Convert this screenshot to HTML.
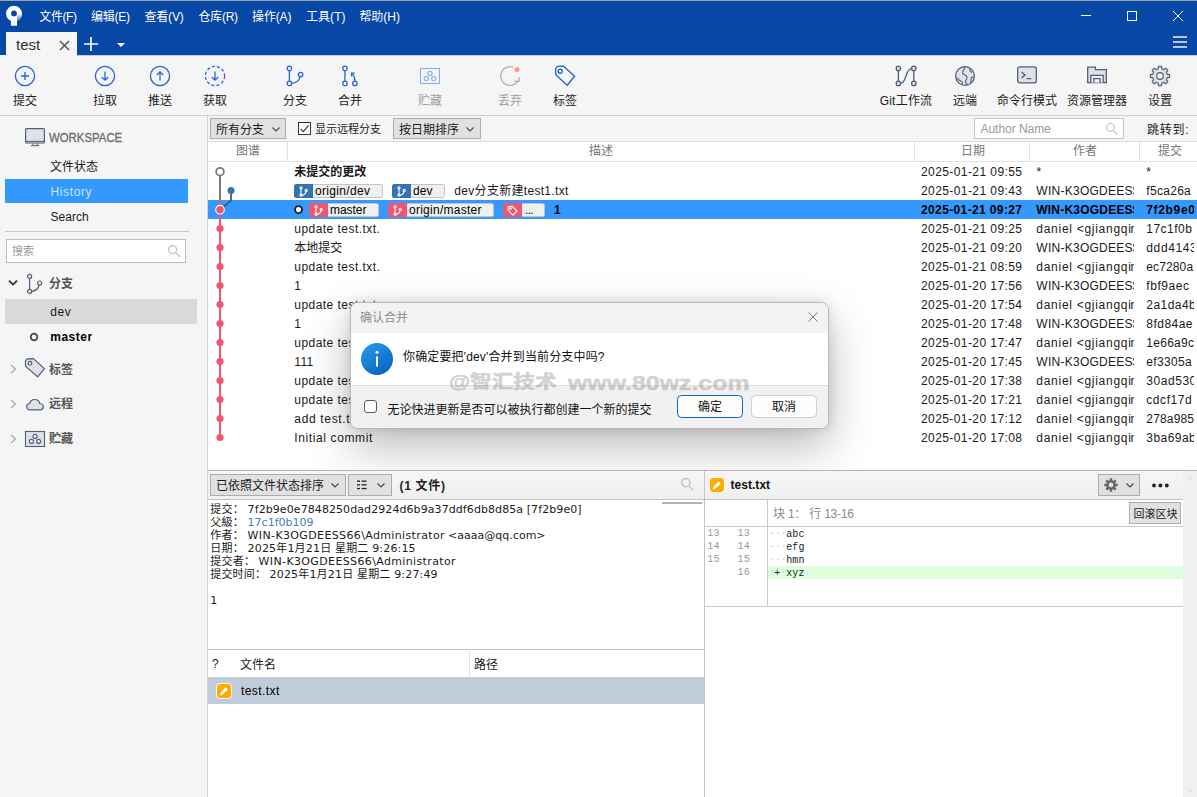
<!DOCTYPE html>
<html lang="zh-CN"><head><meta charset="utf-8"><title>Sourcetree</title>
<style>
html,body{margin:0;padding:0;}
body{width:1197px;height:797px;overflow:hidden;background:#fff;position:relative;
 font-family:"Liberation Sans","Noto Sans CJK SC",sans-serif;font-size:12px;}
.b{position:absolute;box-sizing:border-box;}
.t{position:absolute;white-space:pre;}
.v{font-family:"DejaVu Sans","Noto Sans CJK SC",sans-serif;}
.m{font-family:"Liberation Mono","DejaVu Sans Mono",monospace;}
svg{overflow:visible;}
</style></head>
<body>
<div class="b" style="left:0px;top:0px;width:1197px;height:55px;background:#0747A6;"></div>
<div class="b" style="left:0px;top:0px;width:1197px;height:1px;background:#9AA4A8;"></div>
<svg class="b" style="left:5px;top:5px;" width="20" height="22" viewBox="0 0 20 22"><defs><linearGradient id="lg" x1="0" y1="0" x2="0" y2="1"><stop offset="0" stop-color="#fff"/><stop offset="1" stop-color="#3E6DB8"/></linearGradient></defs><circle cx="9" cy="8.6" r="7.9" fill="#fff"/><path d="M12 8.6H16.9A7.9 7.9 0 0 1 12 15.9Z" fill="url(#lg)"/><rect x="5.9" y="11" width="6.1" height="9.8" rx="0.6" fill="#fff"/><circle cx="9" cy="8.4" r="2.9" fill="#0747A6"/></svg>
<div class="t " style="top:6.5px;font-size:12px;line-height:20px;height:20px;color:#fff;letter-spacing:-0.407px;left:39.3px;"><span id="t1">文件(F)</span></div>
<div class="t " style="top:6.5px;font-size:12px;line-height:20px;height:20px;color:#fff;letter-spacing:-0.25px;left:91px;"><span id="t2">编辑(E)</span></div>
<div class="t " style="top:6.5px;font-size:12px;line-height:20px;height:20px;color:#fff;letter-spacing:-0.15px;left:144.4px;"><span id="t3">查看(V)</span></div>
<div class="t " style="top:6.5px;font-size:12px;line-height:20px;height:20px;color:#fff;letter-spacing:-0.268px;left:198.5px;"><span id="t4">仓库(R)</span></div>
<div class="t " style="top:6.5px;font-size:12px;line-height:20px;height:20px;color:#fff;letter-spacing:-0.125px;left:252px;"><span id="t5">操作(A)</span></div>
<div class="t " style="top:6.5px;font-size:12px;line-height:20px;height:20px;color:#fff;letter-spacing:0.043px;left:306px;"><span id="t6">工具(T)</span></div>
<div class="t " style="top:6.5px;font-size:12px;line-height:20px;height:20px;color:#fff;letter-spacing:-0.018px;left:359.4px;"><span id="t7">帮助(H)</span></div>
<svg class="b" style="left:1075px;top:5px;" width="115" height="22" viewBox="0 0 115 22"><g stroke="#fff" stroke-width="1" fill="none"><path d="M6 10.5H16"/><rect x="52.5" y="6.5" width="9" height="9"/><path d="M98 6L108 16M108 6L98 16"/></g></svg>
<svg class="b" style="left:1173px;top:36px;" width="14" height="12" viewBox="0 0 14 12"><g fill="#B5C6E4"><rect x="0" y="0" width="14" height="2"/><rect x="0" y="5" width="14" height="2"/><rect x="0" y="10" width="14" height="2"/></g></svg>
<div class="b" style="left:6px;top:32px;width:71px;height:24px;background:#F5F5F5;"></div>
<div class="t " style="top:34.5px;font-size:15px;line-height:20px;height:20px;color:#333;letter-spacing:0.004px;left:16px;"><span id="t8">test</span></div>
<svg class="b" style="left:59px;top:40px;" width="11" height="11" viewBox="0 0 11 11"><path d="M1 1L10 10M10 1L1 10" stroke="#555" stroke-width="1.5" fill="none"/></svg>
<svg class="b" style="left:84px;top:37px;" width="14" height="14" viewBox="0 0 14 14"><path d="M7 0V14M0 7H14" stroke="#fff" stroke-width="1.6" fill="none"/></svg>
<svg class="b" style="left:117px;top:43px;" width="8" height="4" viewBox="0 0 8 4"><path d="M0 0H8L4 4Z" fill="#fff"/></svg>
<div class="b" style="left:0px;top:55px;width:1197px;height:61px;background:#F5F5F5;border-bottom:1px solid #D0D0D0;"></div>
<div class="b" style="left:77px;top:55px;width:1120px;height:1px;background:#C9C9C9;"></div>
<svg class="b" style="left:13px;top:64px;" width="24" height="24" viewBox="0 0 24 24"><circle cx="12" cy="12" r="9.6" fill="none" stroke="#2A66D6" stroke-width="1.3"/><path d="M12 8V16M8 12H16" stroke="#2A66D6" stroke-width="1.4" fill="none"/></svg>
<div class="t " style="top:90.8px;font-size:12px;line-height:20px;height:20px;color:#222;left:-175px;width:400px;text-align:center;"><span id="t9">提交</span></div>
<svg class="b" style="left:93px;top:64px;" width="24" height="24" viewBox="0 0 24 24"><circle cx="12" cy="12" r="9.6" fill="none" stroke="#2A66D6" stroke-width="1.3"/><path d="M12 7.5V16M8.8 13L12 16.2L15.2 13" stroke="#2A66D6" stroke-width="1.3" fill="none"/></svg>
<div class="t " style="top:90.8px;font-size:12px;line-height:20px;height:20px;color:#222;left:-95px;width:400px;text-align:center;"><span id="t10">拉取</span></div>
<svg class="b" style="left:148px;top:64px;" width="24" height="24" viewBox="0 0 24 24"><circle cx="12" cy="12" r="9.6" fill="none" stroke="#2A66D6" stroke-width="1.3"/><path d="M12 16.5V8M8.8 11L12 7.8L15.2 11" stroke="#2A66D6" stroke-width="1.3" fill="none"/></svg>
<div class="t " style="top:90.8px;font-size:12px;line-height:20px;height:20px;color:#222;left:-40px;width:400px;text-align:center;"><span id="t11">推送</span></div>
<svg class="b" style="left:203px;top:64px;" width="24" height="24" viewBox="0 0 24 24"><circle cx="12" cy="12" r="9.6" fill="none" stroke="#2A66D6" stroke-width="1.3" stroke-dasharray="3.1 2.1"/><path d="M12 7.5V16M8.8 13L12 16.2L15.2 13" stroke="#2A66D6" stroke-width="1.3" fill="none"/></svg>
<div class="t " style="top:90.8px;font-size:12px;line-height:20px;height:20px;color:#222;left:15px;width:400px;text-align:center;"><span id="t12">获取</span></div>
<svg class="b" style="left:283px;top:64px;" width="24" height="24" viewBox="0 0 24 24"><g fill="none" stroke="#2A66D6" stroke-width="1.3"><path d="M6.4 6.6V17.2"/><path d="M8.5 19.3C13.5 19 16.3 16 17.2 12.6"/><circle cx="6.4" cy="4.4" r="2.2" fill="#F5F5F5"/><circle cx="6.4" cy="19.4" r="2.2" fill="#F5F5F5"/><circle cx="17.6" cy="10.5" r="2.2" fill="#F5F5F5"/></g></svg>
<div class="t " style="top:90.8px;font-size:12px;line-height:20px;height:20px;color:#222;left:95px;width:400px;text-align:center;"><span id="t13">分支</span></div>
<svg class="b" style="left:338px;top:64px;" width="24" height="24" viewBox="0 0 24 24"><g fill="none" stroke="#2A66D6" stroke-width="1.3"><path d="M6.9 6.6V17.2"/><path d="M16.9 17.2C16.9 13.5 15.8 11.2 14.2 9.6"/><path d="M13.6 12.4V9.2H16.8"/><circle cx="6.9" cy="4.4" r="2.2" fill="#F5F5F5"/><circle cx="6.9" cy="19.4" r="2.2" fill="#F5F5F5"/><circle cx="16.9" cy="19.4" r="2.2" fill="#F5F5F5"/></g></svg>
<div class="t " style="top:90.8px;font-size:12px;line-height:20px;height:20px;color:#222;left:150px;width:400px;text-align:center;"><span id="t14">合并</span></div>
<svg class="b" style="left:420px;top:68px;" width="20" height="16" viewBox="0 0 20 16"><g fill="none" stroke="#8FAEE9" stroke-width="1.1"><rect x="0.5" y="0.5" width="19" height="15"/><circle cx="10" cy="5.4" r="2.1"/><circle cx="6.3" cy="10.6" r="2.1"/><circle cx="13.7" cy="10.6" r="2.1"/></g></svg>
<div class="t " style="top:90.8px;font-size:12px;line-height:20px;height:20px;color:#A0A0A0;left:230px;width:400px;text-align:center;"><span id="t15">贮藏</span></div>
<svg class="b" style="left:498px;top:64px;" width="24" height="24" viewBox="0 0 24 24"><g fill="none" stroke="#A9B0BC" stroke-width="1.3"><path d="M15.2 3.1A9.4 9.4 0 1 0 20.2 16.8"/><path d="M16.4 17.3H21V13" /></g><circle cx="19" cy="5.6" r="2.5" fill="#FF9A85"/></svg>
<div class="t " style="top:90.8px;font-size:12px;line-height:20px;height:20px;color:#A0A0A0;left:310px;width:400px;text-align:center;"><span id="t16">丢弃</span></div>
<svg class="b" style="left:553px;top:64px;" width="24" height="24" viewBox="0 0 24 24"><g fill="none" stroke="#2A66D6" stroke-width="1.4" stroke-linejoin="round"><path d="M2.6 4.6L4.4 2.4L10.6 2.2L21.6 12.2L14.2 21.2L2.8 10.8Z"/><circle cx="7.2" cy="7.2" r="2"/></g></svg>
<div class="t " style="top:90.8px;font-size:12px;line-height:20px;height:20px;color:#222;left:365px;width:400px;text-align:center;"><span id="t17">标签</span></div>
<svg class="b" style="left:894px;top:64px;" width="24" height="24" viewBox="0 0 24 24"><g fill="none" stroke="#505F79" stroke-width="1.3"><path d="M4.4 6.6V17.2M19.8 6.6V17.2"/><path d="M6.6 19.2C13.4 18.6 10.6 5.2 17.6 4.6"/><circle cx="4.4" cy="4.4" r="2.2" fill="#DFE1E6"/><circle cx="4.4" cy="19.4" r="2.2" fill="#DFE1E6"/><circle cx="19.8" cy="4.4" r="2.2" fill="#DFE1E6"/><circle cx="19.8" cy="19.4" r="2.2" fill="#DFE1E6"/></g></svg>
<div class="t " style="top:90.8px;font-size:12px;line-height:20px;height:20px;color:#222;letter-spacing:0.231px;left:706px;width:400px;text-align:center;"><span id="t18">Git工作流</span></div>
<svg class="b" style="left:953px;top:64px;" width="24" height="24" viewBox="0 0 24 24"><g stroke="#505F79" stroke-width="1.3"><circle cx="12" cy="12" r="9.4" fill="#DFE1E6"/><path fill="none" stroke-width="1.1" d="M11 3C13 5 9 6.5 9.6 9C10.2 11 13.2 10.6 14 13C14.6 15 12 16 12.6 18.4C13 19.8 14.4 20.4 15 21M17.4 4.6C16 6.4 17.6 8 19.4 8.4M20.8 13.2C19 12.4 17.6 13.6 18 15.4C18.2 16.6 17.4 17.4 17.8 18.8M3.6 14C5.6 14.6 6 16.6 8.2 17.2C9.6 17.6 9.8 19.2 9 20.6"/></g></svg>
<div class="t " style="top:90.8px;font-size:12px;line-height:20px;height:20px;color:#222;left:765px;width:400px;text-align:center;"><span id="t19">远端</span></div>
<svg class="b" style="left:1017px;top:66px;" width="20" height="18" viewBox="0 0 20 18"><g stroke="#505F79" stroke-width="1.3"><rect x="0.7" y="0.9" width="18.6" height="16" rx="2.2" fill="#DFE1E6"/><path fill="none" d="M4.6 6L8 9L4.6 12M9.6 12.6H14.2"/></g></svg>
<div class="t " style="top:90.8px;font-size:12px;line-height:20px;height:20px;color:#222;left:827px;width:400px;text-align:center;"><span id="t20">命令行模式</span></div>
<svg class="b" style="left:1087px;top:66px;" width="20" height="18" viewBox="0 0 20 18"><g stroke="#505F79" stroke-width="1.3" stroke-linejoin="miter"><path fill="#DFE1E6" d="M0.7 16.6V1.2H8.4V3.6H19.3V16.6Z"/><path fill="#F5F5F5" d="M3.8 16.6V9.4H16.2V16.6"/><path fill="none" d="M6.8 16.6V12.6H13.2V16.6"/></g></svg>
<div class="t " style="top:90.8px;font-size:12px;line-height:20px;height:20px;color:#222;left:897px;width:400px;text-align:center;"><span id="t21">资源管理器</span></div>
<svg class="b" style="left:1148px;top:64px;" width="24" height="24" viewBox="0 0 24 24"><g stroke="#505F79" stroke-width="1.2" stroke-linejoin="round"><path fill="#DFE1E6" d="M21.57 10.41L21.57 13.59L19.21 13.67L18.28 15.92L19.89 17.64L17.64 19.89L15.92 18.28L13.67 19.21L13.59 21.57L10.41 21.57L10.33 19.21L8.08 18.28L6.36 19.89L4.11 17.64L5.72 15.92L4.79 13.67L2.43 13.59L2.43 10.41L4.79 10.33L5.72 8.08L4.11 6.36L6.36 4.11L8.08 5.72L10.33 4.79L10.41 2.43L13.59 2.43L13.67 4.79L15.92 5.72L17.64 4.11L19.89 6.36L18.28 8.08L19.21 10.33Z"/><circle cx="12" cy="12" r="3.3" fill="#F5F5F5"/></g></svg>
<div class="t " style="top:90.8px;font-size:12px;line-height:20px;height:20px;color:#222;left:960px;width:400px;text-align:center;"><span id="t22">设置</span></div>
<div class="b" style="left:0px;top:116px;width:208px;height:681px;background:#F5F5F5;border-right:1px solid #D4D4D4;"></div>
<svg class="b" style="left:25px;top:128px;" width="20" height="19" viewBox="0 0 20 19"><g stroke="#505F79" stroke-width="1.2"><rect x="0.6" y="0.6" width="18.8" height="14.4" rx="1" fill="#DFE1E6"/><path d="M0.6 13.4H19.4" stroke-width="1"/><path d="M8 15.4V17.6M12 15.4V17.6M6 17.7H14" fill="none" stroke-width="1"/></g></svg>
<div class="t " style="top:127.6px;font-size:13.5px;line-height:20px;height:20px;color:#6A6A6A;left:49.3px;-webkit-text-stroke:0.3px #6A6A6A;transform:scaleX(0.8437);transform-origin:0 50%;"><span id="t23">WORKSPACE</span></div>
<div class="t " style="top:157.0px;font-size:12px;line-height:20px;height:20px;color:#1a1a1a;left:50px;"><span id="t24">文件状态</span></div>
<div class="b" style="left:5px;top:179px;width:183px;height:24px;background:#3399FF;"></div>
<div class="t " style="top:181.5px;font-size:12px;line-height:20px;height:20px;color:#CFE4FF;letter-spacing:0.643px;left:50.4px;"><span id="t25">History</span></div>
<div class="t " style="top:206.5px;font-size:12px;line-height:20px;height:20px;color:#1a1a1a;letter-spacing:0.074px;left:50.4px;"><span id="t26">Search</span></div>
<div class="b" style="left:5px;top:231px;width:184px;height:1px;background:#C8C8C8;"></div>
<div class="b" style="left:6px;top:239px;width:180px;height:24px;background:#fff;border:1px solid #BDBDBD;"></div>
<div class="t " style="top:240.5px;font-size:11px;line-height:20px;height:20px;color:#999;left:12px;"><span id="t27">搜索</span></div>
<svg class="b" style="left:167px;top:243.5px;" width="14" height="14" viewBox="0 0 14 14"><g fill="none" stroke="#C0C0C0" stroke-width="1.2"><circle cx="5.6" cy="5.6" r="4"/><path d="M8.6 8.6L13 13"/></g></svg>
<svg class="b" style="left:8px;top:279px;" width="10" height="8" viewBox="0 0 10 8"><path d="M1 1.6L5 5.6L9 1.6" fill="none" stroke="#333" stroke-width="1.8"/></svg>
<svg class="b" style="left:25px;top:273px;" width="18" height="22" viewBox="0 0 18 22"><g fill="none" stroke="#505F79" stroke-width="1.2"><path d="M4.6 5.4V16.4"/><path d="M6.4 18.4C11 18 13.4 15.6 14.2 12"/><circle cx="4.6" cy="3.4" r="2" fill="#F5F5F5"/><circle cx="4.6" cy="18.4" r="2" fill="#F5F5F5"/><circle cx="14.6" cy="10" r="2" fill="#F5F5F5"/></g></svg>
<div class="t " style="top:274.0px;font-size:12px;line-height:20px;height:20px;color:#555;font-weight:bold;left:49px;"><span id="t28">分支</span></div>
<div class="b" style="left:5px;top:299px;width:192px;height:25px;background:#D9D9D9;"></div>
<div class="t " style="top:301.5px;font-size:12px;line-height:20px;height:20px;color:#1a1a1a;letter-spacing:0.62px;left:50.2px;"><span id="t29">dev</span></div>
<svg class="b" style="left:29px;top:332px;" width="10" height="10" viewBox="0 0 10 10"><circle cx="5" cy="5" r="3.3" fill="none" stroke="#3B4A66" stroke-width="1.8"/></svg>
<div class="t " style="top:326.5px;font-size:12px;line-height:20px;height:20px;color:#000;font-weight:bold;letter-spacing:0.528px;left:50.2px;"><span id="t30">master</span></div>
<svg class="b" style="left:10px;top:363.8px;" width="7" height="10" viewBox="0 0 7 10"><path d="M1 1L5.4 5L1 9" fill="none" stroke="#B0B0B0" stroke-width="1.5"/></svg>
<svg class="b" style="left:10px;top:399.0px;" width="7" height="10" viewBox="0 0 7 10"><path d="M1 1L5.4 5L1 9" fill="none" stroke="#B0B0B0" stroke-width="1.5"/></svg>
<svg class="b" style="left:10px;top:434.1px;" width="7" height="10" viewBox="0 0 7 10"><path d="M1 1L5.4 5L1 9" fill="none" stroke="#B0B0B0" stroke-width="1.5"/></svg>
<svg class="b" style="left:24px;top:357px;" width="24" height="24" viewBox="0 0 24 24"><g stroke="#505F79" stroke-width="1.2" stroke-linejoin="round"><path fill="#DFE1E6" d="M1.4 4L3 1.8L9.4 1.6L20.4 11.6L13.6 19.8L1.6 9.4Z"/><circle cx="6" cy="6.2" r="1.8" fill="#F5F5F5"/></g></svg>
<div class="t " style="top:359.5px;font-size:12px;line-height:20px;height:20px;color:#555;font-weight:bold;left:49px;"><span id="t31">标签</span></div>
<svg class="b" style="left:25.5px;top:397.5px;" width="18" height="13" viewBox="0 0 18 13"><path d="M4.2 11.8C2.2 11.8 0.7 10.5 0.7 8.7C0.7 7 2 5.7 3.7 5.5C4.3 3.1 6.3 1.5 8.7 1.5C11.2 1.5 13.2 3.1 13.8 5.5C15.8 5.7 17.3 7 17.3 8.8C17.3 10.5 16 11.8 14.2 11.8Z" fill="#DFE1E6" stroke="#505F79" stroke-width="1.2"/></svg>
<div class="t " style="top:394.0px;font-size:12px;line-height:20px;height:20px;color:#555;font-weight:bold;left:49px;"><span id="t32">远程</span></div>
<svg class="b" style="left:25px;top:431px;" width="20" height="16" viewBox="0 0 20 16"><g stroke="#505F79" stroke-width="1.1"><rect x="0.5" y="0.5" width="19" height="15" fill="#DFE1E6"/><circle cx="10" cy="5.4" r="2" fill="#F5F5F5"/><circle cx="6.4" cy="10.4" r="2" fill="#F5F5F5"/><circle cx="13.6" cy="10.4" r="2" fill="#F5F5F5"/></g></svg>
<div class="t " style="top:429.1px;font-size:12px;line-height:20px;height:20px;color:#555;font-weight:bold;left:49px;"><span id="t33">贮藏</span></div>
<div class="b" style="left:208px;top:116px;width:989px;height:26px;background:#F5F5F5;"></div>
<div class="b" style="left:210px;top:118px;width:76px;height:21px;background:#E1E1E1;border:1px solid #ADADAD;"></div>
<div class="t " style="top:119.5px;font-size:12px;line-height:20px;height:20px;color:#1a1a1a;left:216px;"><span id="t34">所有分支</span></div>
<svg class="b" style="left:271.7px;top:126.5px;" width="8" height="5" viewBox="0 0 8 5"><path d="M0.5 0.5L4 4L7.5 0.5" fill="none" stroke="#444" stroke-width="1.1"/></svg>
<div class="b" style="left:298px;top:122px;width:13px;height:13px;background:#fff;border:1px solid #333;"></div>
<svg class="b" style="left:298px;top:122px;" width="13" height="13" viewBox="0 0 13 13"><path d="M2.6 6.8L5.2 9.6L10.6 3.4" fill="none" stroke="#333" stroke-width="1.1"/></svg>
<div class="t " style="top:119.0px;font-size:11px;line-height:20px;height:20px;color:#1a1a1a;left:315px;"><span id="t35">显示远程分支</span></div>
<div class="b" style="left:393px;top:118px;width:88px;height:21px;background:#E1E1E1;border:1px solid #ADADAD;"></div>
<div class="t " style="top:119.5px;font-size:12px;line-height:20px;height:20px;color:#1a1a1a;left:399px;"><span id="t36">按日期排序</span></div>
<svg class="b" style="left:466px;top:126.5px;" width="8" height="5" viewBox="0 0 8 5"><path d="M0.5 0.5L4 4L7.5 0.5" fill="none" stroke="#444" stroke-width="1.1"/></svg>
<div class="b" style="left:974px;top:118px;width:150px;height:21px;background:#fff;border:1px solid #C6C6C6;"></div>
<div class="t " style="top:118.5px;font-size:12px;line-height:20px;height:20px;color:#999;letter-spacing:-0.04px;left:980.5px;"><span id="t37">Author Name</span></div>
<svg class="b" style="left:1105px;top:122px;" width="14" height="14" viewBox="0 0 14 14"><g fill="none" stroke="#C0C0C0" stroke-width="1.2"><circle cx="5.4" cy="5.4" r="3.9"/><path d="M8.4 8.4L12.6 12.6"/></g></svg>
<div class="t " style="top:119.5px;font-size:12px;line-height:20px;height:20px;color:#1a1a1a;letter-spacing:0.719px;left:1147px;"><span id="t38">跳转到:</span></div>
<div class="b" style="left:208px;top:141px;width:989px;height:21px;background:#fff;border-top:1px solid #DCDCDC;border-bottom:1px solid #E3E3E3;"></div>
<div class="b" style="left:287px;top:142px;width:1px;height:19px;background:#E3E3E3;"></div>
<div class="b" style="left:914px;top:142px;width:1px;height:19px;background:#E3E3E3;"></div>
<div class="b" style="left:1029px;top:142px;width:1px;height:19px;background:#E3E3E3;"></div>
<div class="b" style="left:1139px;top:142px;width:1px;height:19px;background:#E3E3E3;"></div>
<div class="t " style="top:141.0px;font-size:12px;line-height:20px;height:20px;color:#777;left:48px;width:400px;text-align:center;"><span id="t39">图谱</span></div>
<div class="t " style="top:141.0px;font-size:12px;line-height:20px;height:20px;color:#777;left:401px;width:400px;text-align:center;"><span id="t40">描述</span></div>
<div class="t " style="top:141.0px;font-size:12px;line-height:20px;height:20px;color:#777;left:773px;width:400px;text-align:center;"><span id="t41">日期</span></div>
<div class="t " style="top:141.0px;font-size:12px;line-height:20px;height:20px;color:#777;left:885px;width:400px;text-align:center;"><span id="t42">作者</span></div>
<div class="t " style="top:141.0px;font-size:12px;line-height:20px;height:20px;color:#777;left:970px;width:400px;text-align:center;"><span id="t43">提交</span></div>
<div class="b" style="left:208px;top:200px;width:989px;height:19px;background:#3399FF;"></div>
<div class="t " style="top:162.0px;font-size:12px;line-height:20px;height:20px;color:#1a1a1a;font-weight:bold;left:294.3px;"><span id="t44">未提交的更改</span></div>
<div class="t " style="top:161.5px;font-size:12px;line-height:20px;height:20px;color:#1a1a1a;letter-spacing:0.417px;left:921px;"><span id="t45">2025-01-21 09:55</span></div>
<div class="t " style="top:161.5px;font-size:12px;line-height:20px;height:20px;color:#1a1a1a;left:1036.5px;"><span id="t46">*</span></div>
<div class="t " style="top:161.5px;font-size:12px;line-height:20px;height:20px;color:#1a1a1a;left:1146.3px;width:48px;overflow:hidden;"><span id="t47">*</span></div>
<div class="t " style="top:180.5px;font-size:12px;line-height:20px;height:20px;color:#1a1a1a;letter-spacing:0.417px;left:921px;"><span id="t48">2025-01-21 09:43</span></div>
<div class="t " style="top:180.5px;font-size:12px;line-height:20px;height:20px;color:#1a1a1a;letter-spacing:0.267px;left:1036.3px;"><span id="t49">WIN-K3OGDEES</span></div>
<div class="t " style="top:180.5px;font-size:12px;line-height:20px;height:20px;color:#1a1a1a;left:1132.2px;width:1.8px;overflow:hidden;"><span id="t50">S66\Administrator</span></div>
<div class="t " style="top:180.5px;font-size:12px;line-height:20px;height:20px;color:#1a1a1a;letter-spacing:0.299px;left:1146.3px;width:48px;overflow:hidden;"><span id="t51">f5ca26a</span></div>
<div class="t " style="top:199.5px;font-size:12px;line-height:20px;height:20px;color:#000;font-weight:bold;letter-spacing:0.372px;left:921px;"><span id="t52">2025-01-21 09:27</span></div>
<div class="t " style="top:199.5px;font-size:12px;line-height:20px;height:20px;color:#000;font-weight:bold;letter-spacing:0.208px;left:1036.3px;"><span id="t53">WIN-K3OGDEES</span></div>
<div class="t " style="top:199.5px;font-size:12px;line-height:20px;height:20px;color:#000;font-weight:bold;left:1132.2px;width:1.8px;overflow:hidden;"><span id="t54">S66\Administrator</span></div>
<div class="t " style="top:199.5px;font-size:12px;line-height:20px;height:20px;color:#000;font-weight:bold;letter-spacing:0.649px;left:1146.3px;width:48px;overflow:hidden;"><span id="t55">7f2b9e0</span></div>
<div class="t " style="top:218.5px;font-size:12px;line-height:20px;height:20px;color:#1a1a1a;letter-spacing:0.459px;left:294.3px;"><span id="t56">update test.txt.</span></div>
<div class="t " style="top:218.5px;font-size:12px;line-height:20px;height:20px;color:#1a1a1a;letter-spacing:0.417px;left:921px;"><span id="t57">2025-01-21 09:25</span></div>
<div class="t " style="top:218.5px;font-size:12px;line-height:20px;height:20px;color:#1a1a1a;letter-spacing:0.723px;left:1036.3px;"><span id="t58">daniel &lt;gjiangqi</span></div>
<div class="t " style="top:218.5px;font-size:12px;line-height:20px;height:20px;color:#1a1a1a;left:1130.6px;width:3.4px;overflow:hidden;"><span id="t59">n@qq.com&gt;</span></div>
<div class="t " style="top:218.5px;font-size:12px;line-height:20px;height:20px;color:#1a1a1a;letter-spacing:0.483px;left:1146.3px;width:48px;overflow:hidden;"><span id="t60">17c1f0b</span></div>
<div class="t " style="top:238.0px;font-size:12px;line-height:20px;height:20px;color:#1a1a1a;left:294.3px;"><span id="t61">本地提交</span></div>
<div class="t " style="top:237.5px;font-size:12px;line-height:20px;height:20px;color:#1a1a1a;letter-spacing:0.417px;left:921px;"><span id="t62">2025-01-21 09:20</span></div>
<div class="t " style="top:237.5px;font-size:12px;line-height:20px;height:20px;color:#1a1a1a;letter-spacing:0.267px;left:1036.3px;"><span id="t63">WIN-K3OGDEES</span></div>
<div class="t " style="top:237.5px;font-size:12px;line-height:20px;height:20px;color:#1a1a1a;left:1132.2px;width:1.8px;overflow:hidden;"><span id="t64">S66\Administrator</span></div>
<div class="t " style="top:237.5px;font-size:12px;line-height:20px;height:20px;color:#1a1a1a;letter-spacing:0.63px;left:1146.3px;width:48px;overflow:hidden;"><span id="t65">ddd4143</span></div>
<div class="t " style="top:256.5px;font-size:12px;line-height:20px;height:20px;color:#1a1a1a;letter-spacing:0.459px;left:294.3px;"><span id="t66">update test.txt.</span></div>
<div class="t " style="top:256.5px;font-size:12px;line-height:20px;height:20px;color:#1a1a1a;letter-spacing:0.417px;left:921px;"><span id="t67">2025-01-21 08:59</span></div>
<div class="t " style="top:256.5px;font-size:12px;line-height:20px;height:20px;color:#1a1a1a;letter-spacing:0.723px;left:1036.3px;"><span id="t68">daniel &lt;gjiangqi</span></div>
<div class="t " style="top:256.5px;font-size:12px;line-height:20px;height:20px;color:#1a1a1a;left:1130.6px;width:3.4px;overflow:hidden;"><span id="t69">n@qq.com&gt;</span></div>
<div class="t " style="top:256.5px;font-size:12px;line-height:20px;height:20px;color:#1a1a1a;letter-spacing:0.126px;left:1146.3px;width:48px;overflow:hidden;"><span id="t70">ec7280a</span></div>
<div class="t " style="top:275.5px;font-size:12px;line-height:20px;height:20px;color:#1a1a1a;left:294.3px;"><span id="t71">1</span></div>
<div class="t " style="top:275.5px;font-size:12px;line-height:20px;height:20px;color:#1a1a1a;letter-spacing:0.417px;left:921px;"><span id="t72">2025-01-20 17:56</span></div>
<div class="t " style="top:275.5px;font-size:12px;line-height:20px;height:20px;color:#1a1a1a;letter-spacing:0.267px;left:1036.3px;"><span id="t73">WIN-K3OGDEES</span></div>
<div class="t " style="top:275.5px;font-size:12px;line-height:20px;height:20px;color:#1a1a1a;left:1132.2px;width:1.8px;overflow:hidden;"><span id="t74">S66\Administrator</span></div>
<div class="t " style="top:275.5px;font-size:12px;line-height:20px;height:20px;color:#1a1a1a;letter-spacing:0.571px;left:1146.3px;width:48px;overflow:hidden;"><span id="t75">fbf9aec</span></div>
<div class="t " style="top:294.5px;font-size:12px;line-height:20px;height:20px;color:#1a1a1a;letter-spacing:0.459px;left:294.3px;"><span id="t76">update test.txt.</span></div>
<div class="t " style="top:294.5px;font-size:12px;line-height:20px;height:20px;color:#1a1a1a;letter-spacing:0.417px;left:921px;"><span id="t77">2025-01-20 17:54</span></div>
<div class="t " style="top:294.5px;font-size:12px;line-height:20px;height:20px;color:#1a1a1a;letter-spacing:0.723px;left:1036.3px;"><span id="t78">daniel &lt;gjiangqi</span></div>
<div class="t " style="top:294.5px;font-size:12px;line-height:20px;height:20px;color:#1a1a1a;left:1130.6px;width:3.4px;overflow:hidden;"><span id="t79">n@qq.com&gt;</span></div>
<div class="t " style="top:294.5px;font-size:12px;line-height:20px;height:20px;color:#1a1a1a;letter-spacing:0.464px;left:1146.3px;width:48px;overflow:hidden;"><span id="t80">2a1da4b</span></div>
<div class="t " style="top:313.5px;font-size:12px;line-height:20px;height:20px;color:#1a1a1a;left:294.3px;"><span id="t81">1</span></div>
<div class="t " style="top:313.5px;font-size:12px;line-height:20px;height:20px;color:#1a1a1a;letter-spacing:0.417px;left:921px;"><span id="t82">2025-01-20 17:48</span></div>
<div class="t " style="top:313.5px;font-size:12px;line-height:20px;height:20px;color:#1a1a1a;letter-spacing:0.267px;left:1036.3px;"><span id="t83">WIN-K3OGDEES</span></div>
<div class="t " style="top:313.5px;font-size:12px;line-height:20px;height:20px;color:#1a1a1a;left:1132.2px;width:1.8px;overflow:hidden;"><span id="t84">S66\Administrator</span></div>
<div class="t " style="top:313.5px;font-size:12px;line-height:20px;height:20px;color:#1a1a1a;letter-spacing:0.468px;left:1146.3px;width:48px;overflow:hidden;"><span id="t85">8fd84ae</span></div>
<div class="t " style="top:332.5px;font-size:12px;line-height:20px;height:20px;color:#1a1a1a;letter-spacing:0.459px;left:294.3px;"><span id="t86">update test.txt.</span></div>
<div class="t " style="top:332.5px;font-size:12px;line-height:20px;height:20px;color:#1a1a1a;letter-spacing:0.417px;left:921px;"><span id="t87">2025-01-20 17:47</span></div>
<div class="t " style="top:332.5px;font-size:12px;line-height:20px;height:20px;color:#1a1a1a;letter-spacing:0.723px;left:1036.3px;"><span id="t88">daniel &lt;gjiangqi</span></div>
<div class="t " style="top:332.5px;font-size:12px;line-height:20px;height:20px;color:#1a1a1a;left:1130.6px;width:3.4px;overflow:hidden;"><span id="t89">n@qq.com&gt;</span></div>
<div class="t " style="top:332.5px;font-size:12px;line-height:20px;height:20px;color:#1a1a1a;letter-spacing:0.276px;left:1146.3px;width:48px;overflow:hidden;"><span id="t90">1e66a9c</span></div>
<div class="t " style="top:351.5px;font-size:12px;line-height:20px;height:20px;color:#1a1a1a;letter-spacing:0.375px;left:294.3px;"><span id="t91">111</span></div>
<div class="t " style="top:351.5px;font-size:12px;line-height:20px;height:20px;color:#1a1a1a;letter-spacing:0.417px;left:921px;"><span id="t92">2025-01-20 17:45</span></div>
<div class="t " style="top:351.5px;font-size:12px;line-height:20px;height:20px;color:#1a1a1a;letter-spacing:0.267px;left:1036.3px;"><span id="t93">WIN-K3OGDEES</span></div>
<div class="t " style="top:351.5px;font-size:12px;line-height:20px;height:20px;color:#1a1a1a;left:1132.2px;width:1.8px;overflow:hidden;"><span id="t94">S66\Administrator</span></div>
<div class="t " style="top:351.5px;font-size:12px;line-height:20px;height:20px;color:#1a1a1a;letter-spacing:0.335px;left:1146.3px;width:48px;overflow:hidden;"><span id="t95">ef3305a</span></div>
<div class="t " style="top:370.5px;font-size:12px;line-height:20px;height:20px;color:#1a1a1a;letter-spacing:0.459px;left:294.3px;"><span id="t96">update test.txt.</span></div>
<div class="t " style="top:370.5px;font-size:12px;line-height:20px;height:20px;color:#1a1a1a;letter-spacing:0.417px;left:921px;"><span id="t97">2025-01-20 17:38</span></div>
<div class="t " style="top:370.5px;font-size:12px;line-height:20px;height:20px;color:#1a1a1a;letter-spacing:0.723px;left:1036.3px;"><span id="t98">daniel &lt;gjiangqi</span></div>
<div class="t " style="top:370.5px;font-size:12px;line-height:20px;height:20px;color:#1a1a1a;left:1130.6px;width:3.4px;overflow:hidden;"><span id="t99">n@qq.com&gt;</span></div>
<div class="t " style="top:370.5px;font-size:12px;line-height:20px;height:20px;color:#1a1a1a;letter-spacing:0.547px;left:1146.3px;width:48px;overflow:hidden;"><span id="t100">30ad530</span></div>
<div class="t " style="top:389.5px;font-size:12px;line-height:20px;height:20px;color:#1a1a1a;letter-spacing:0.459px;left:294.3px;"><span id="t101">update test.txt.</span></div>
<div class="t " style="top:389.5px;font-size:12px;line-height:20px;height:20px;color:#1a1a1a;letter-spacing:0.417px;left:921px;"><span id="t102">2025-01-20 17:21</span></div>
<div class="t " style="top:389.5px;font-size:12px;line-height:20px;height:20px;color:#1a1a1a;letter-spacing:0.723px;left:1036.3px;"><span id="t103">daniel &lt;gjiangqi</span></div>
<div class="t " style="top:389.5px;font-size:12px;line-height:20px;height:20px;color:#1a1a1a;left:1130.6px;width:3.4px;overflow:hidden;"><span id="t104">n@qq.com&gt;</span></div>
<div class="t " style="top:389.5px;font-size:12px;line-height:20px;height:20px;color:#1a1a1a;letter-spacing:0.561px;left:1146.3px;width:48px;overflow:hidden;"><span id="t105">cdcf17d</span></div>
<div class="t " style="top:408.5px;font-size:12px;line-height:20px;height:20px;color:#1a1a1a;letter-spacing:0.663px;left:294.3px;"><span id="t106">add test.txt.</span></div>
<div class="t " style="top:408.5px;font-size:12px;line-height:20px;height:20px;color:#1a1a1a;letter-spacing:0.417px;left:921px;"><span id="t107">2025-01-20 17:12</span></div>
<div class="t " style="top:408.5px;font-size:12px;line-height:20px;height:20px;color:#1a1a1a;letter-spacing:0.723px;left:1036.3px;"><span id="t108">daniel &lt;gjiangqi</span></div>
<div class="t " style="top:408.5px;font-size:12px;line-height:20px;height:20px;color:#1a1a1a;left:1130.6px;width:3.4px;overflow:hidden;"><span id="t109">n@qq.com&gt;</span></div>
<div class="t " style="top:408.5px;font-size:12px;line-height:20px;height:20px;color:#1a1a1a;letter-spacing:0.164px;left:1146.3px;width:48px;overflow:hidden;"><span id="t110">278a985</span></div>
<div class="t " style="top:427.5px;font-size:12px;line-height:20px;height:20px;color:#1a1a1a;letter-spacing:0.614px;left:294.3px;"><span id="t111">Initial commit</span></div>
<div class="t " style="top:427.5px;font-size:12px;line-height:20px;height:20px;color:#1a1a1a;letter-spacing:0.417px;left:921px;"><span id="t112">2025-01-20 17:08</span></div>
<div class="t " style="top:427.5px;font-size:12px;line-height:20px;height:20px;color:#1a1a1a;letter-spacing:0.723px;left:1036.3px;"><span id="t113">daniel &lt;gjiangqi</span></div>
<div class="t " style="top:427.5px;font-size:12px;line-height:20px;height:20px;color:#1a1a1a;left:1130.6px;width:3.4px;overflow:hidden;"><span id="t114">n@qq.com&gt;</span></div>
<div class="t " style="top:427.5px;font-size:12px;line-height:20px;height:20px;color:#1a1a1a;letter-spacing:0.464px;left:1146.3px;width:48px;overflow:hidden;"><span id="t115">3ba69ab</span></div>
<svg class="b" style="left:208px;top:141px;" width="80" height="310" viewBox="0 0 80 310"><path d="M12 34.5V59" stroke="#7A7A7A" stroke-width="2" fill="none"/><path d="M12 59V296.5" stroke="#F0566F" stroke-width="2" fill="none"/><path d="M23 49.5V59.5L12.5 68.5" stroke="#3F5A7D" stroke-width="1.8" fill="none"/><circle cx="12" cy="30.7" r="3.9" fill="#fff" stroke="#7A7A7A" stroke-width="1.8"/><circle cx="23" cy="49.4" r="3.5" fill="#3572B0"/><circle cx="12" cy="68.7" r="4.3" fill="#F0566F" stroke="#fff" stroke-width="1.1"/><circle cx="12" cy="87.5" r="3.6" fill="#F0566F"/><circle cx="12" cy="106.5" r="3.6" fill="#F0566F"/><circle cx="12" cy="125.5" r="3.6" fill="#F0566F"/><circle cx="12" cy="144.5" r="3.6" fill="#F0566F"/><circle cx="12" cy="163.5" r="3.6" fill="#F0566F"/><circle cx="12" cy="182.5" r="3.6" fill="#F0566F"/><circle cx="12" cy="201.5" r="3.6" fill="#F0566F"/><circle cx="12" cy="220.5" r="3.6" fill="#F0566F"/><circle cx="12" cy="239.5" r="3.6" fill="#F0566F"/><circle cx="12" cy="258.5" r="3.6" fill="#F0566F"/><circle cx="12" cy="277.5" r="3.6" fill="#F0566F"/><circle cx="12" cy="296.5" r="3.6" fill="#F0566F"/></svg>
<div class="b" style="left:294px;top:183.5px;width:89px;height:14.5px;background:#F0F0F0;border:1px solid #C4C4C4;border-radius:2.5px;"></div>
<div class="b" style="left:294px;top:183.5px;width:18.5px;height:14.5px;background:#3572B0;border-radius:2.5px 0 0 2.5px;"></div>
<svg class="b" style="left:298px;top:185.5px;" width="11" height="11" viewBox="0 0 11 11"><g fill="none" stroke="#fff" stroke-width="1.1"><path d="M3 2.6V8.4"/><path d="M3.8 9.2C6.4 9 7.6 7.4 8 5.6"/><circle cx="3" cy="1.8" r="1.1"/><circle cx="3" cy="9.2" r="1.1"/><circle cx="8.2" cy="4.4" r="1.1"/></g></svg>
<div class="t " style="top:181.0px;font-size:12px;line-height:20px;height:20px;color:#000;letter-spacing:0.33px;left:315px;"><span id="t116">origin/dev</span></div>
<div class="b" style="left:392px;top:183.5px;width:53px;height:14.5px;background:#F0F0F0;border:1px solid #C4C4C4;border-radius:2.5px;"></div>
<div class="b" style="left:392px;top:183.5px;width:18.5px;height:14.5px;background:#3572B0;border-radius:2.5px 0 0 2.5px;"></div>
<svg class="b" style="left:396px;top:185.5px;" width="11" height="11" viewBox="0 0 11 11"><g fill="none" stroke="#fff" stroke-width="1.1"><path d="M3 2.6V8.4"/><path d="M3.8 9.2C6.4 9 7.6 7.4 8 5.6"/><circle cx="3" cy="1.8" r="1.1"/><circle cx="3" cy="9.2" r="1.1"/><circle cx="8.2" cy="4.4" r="1.1"/></g></svg>
<div class="t " style="top:181.0px;font-size:12px;line-height:20px;height:20px;color:#000;letter-spacing:0.07px;left:413px;"><span id="t117">dev</span></div>
<div class="t " style="top:181.0px;font-size:12px;line-height:20px;height:20px;color:#1a1a1a;letter-spacing:0.308px;left:454.3px;"><span id="t118">dev分支新建test1.txt</span></div>
<svg class="b" style="left:293px;top:204px;" width="11" height="11" viewBox="0 0 11 11"><circle cx="5.5" cy="5.6" r="3.5" fill="#fff" stroke="#222" stroke-width="1.9"/></svg>
<div class="b" style="left:309px;top:202.5px;width:70px;height:14.5px;background:#F0F0F0;border:1px solid #C4C4C4;border-radius:2.5px;"></div>
<div class="b" style="left:309px;top:202.5px;width:18.5px;height:14.5px;background:#F0566F;border-radius:2.5px 0 0 2.5px;"></div>
<svg class="b" style="left:313px;top:204.5px;" width="11" height="11" viewBox="0 0 11 11"><g fill="none" stroke="#fff" stroke-width="1.1"><path d="M3 2.6V8.4"/><path d="M3.8 9.2C6.4 9 7.6 7.4 8 5.6"/><circle cx="3" cy="1.8" r="1.1"/><circle cx="3" cy="9.2" r="1.1"/><circle cx="8.2" cy="4.4" r="1.1"/></g></svg>
<div class="t " style="top:200.0px;font-size:12px;line-height:20px;height:20px;color:#000;letter-spacing:-0.037px;left:330px;"><span id="t119">master</span></div>
<div class="b" style="left:388px;top:202.5px;width:106px;height:14.5px;background:#F0F0F0;border:1px solid #C4C4C4;border-radius:2.5px;"></div>
<div class="b" style="left:388px;top:202.5px;width:18.5px;height:14.5px;background:#F0566F;border-radius:2.5px 0 0 2.5px;"></div>
<svg class="b" style="left:392px;top:204.5px;" width="11" height="11" viewBox="0 0 11 11"><g fill="none" stroke="#fff" stroke-width="1.1"><path d="M3 2.6V8.4"/><path d="M3.8 9.2C6.4 9 7.6 7.4 8 5.6"/><circle cx="3" cy="1.8" r="1.1"/><circle cx="3" cy="9.2" r="1.1"/><circle cx="8.2" cy="4.4" r="1.1"/></g></svg>
<div class="t " style="top:200.0px;font-size:12px;line-height:20px;height:20px;color:#000;letter-spacing:0.262px;left:409px;"><span id="t120">origin/master</span></div>
<div class="b" style="left:503px;top:202.5px;width:42px;height:14.5px;background:#F0F0F0;border:1px solid #C4C4C4;border-radius:2.5px;"></div>
<div class="b" style="left:503px;top:202.5px;width:18.5px;height:14.5px;background:#F0566F;border-radius:2.5px 0 0 2.5px;"></div>
<svg class="b" style="left:507px;top:204.5px;" width="11" height="11" viewBox="0 0 11 11"><g fill="none" stroke="#fff" stroke-width="1.1" stroke-linejoin="round"><path d="M1 1.6L5 1.2L10 6L6 10.2L1 5.4Z"/><circle cx="3.4" cy="3.6" r="0.8"/></g></svg>
<div class="t " style="top:200.0px;font-size:12px;line-height:20px;height:20px;color:#000;letter-spacing:-0.708px;left:525px;"><span id="t121">...</span></div>
<div class="t " style="top:199.5px;font-size:12px;line-height:20px;height:20px;color:#000;font-weight:bold;left:554px;"><span id="t122">1</span></div>
<div class="b" style="left:208px;top:470px;width:989px;height:1px;background:#B4B4B4;"></div>
<div class="b" style="left:208px;top:471px;width:496px;height:29px;background:linear-gradient(#F6F6F6,#EFEFEF);border-bottom:1px solid #C4C4C4;"></div>
<div class="b" style="left:210px;top:474px;width:136px;height:22px;background:#E1E1E1;border:1px solid #ADADAD;"></div>
<div class="t " style="top:475.5px;font-size:12px;line-height:20px;height:20px;color:#1a1a1a;left:216px;"><span id="t123">已依照文件状态排序</span></div>
<svg class="b" style="left:331.3px;top:482.5px;" width="8" height="5" viewBox="0 0 8 5"><path d="M0.5 0.5L4 4L7.5 0.5" fill="none" stroke="#444" stroke-width="1.1"/></svg>
<div class="b" style="left:348px;top:474px;width:44px;height:22px;background:#E1E1E1;border:1px solid #ADADAD;"></div>
<svg class="b" style="left:357px;top:480px;" width="10" height="10" viewBox="0 0 10 10"><g fill="#222"><rect x="0" y="0.5" width="3" height="1.3"/><rect x="4.6" y="0.5" width="5" height="1.3"/><rect x="0" y="4.2" width="3" height="1.3"/><rect x="4.6" y="4.2" width="5" height="1.3"/><rect x="0" y="7.9" width="3" height="1.3"/><rect x="4.6" y="7.9" width="5" height="1.3"/></g></svg>
<svg class="b" style="left:377px;top:482.5px;" width="8" height="5" viewBox="0 0 8 5"><path d="M0.5 0.5L4 4L7.5 0.5" fill="none" stroke="#444" stroke-width="1.1"/></svg>
<div class="t " style="top:475.5px;font-size:12px;line-height:20px;height:20px;color:#222;font-weight:bold;letter-spacing:0.697px;left:399.5px;"><span id="t124">(1 文件)</span></div>
<svg class="b" style="left:680px;top:477px;" width="14" height="14" viewBox="0 0 14 14"><g fill="none" stroke="#B8B8B8" stroke-width="1.2"><circle cx="5.8" cy="5.8" r="4.1"/><path d="M8.8 8.8L13.2 13.2"/></g></svg>
<div class="b" style="left:662px;top:502px;width:40px;height:2px;background:#B4B4B4;"></div>
<div class="b" style="left:704px;top:471px;width:1px;height:326px;background:#C4C4C4;"></div>
<div class="t v" style="top:502.5px;font-size:11px;line-height:13px;height:13px;color:#1a1a1a;letter-spacing:0.267px;left:210.3px;"><span id="t125">提交： </span></div>
<div class="t v" style="top:502.5px;font-size:11px;line-height:13px;height:13px;color:#1a1a1a;letter-spacing:0.082px;left:247.60000000000002px;"><span id="t126">7f2b9e0e7848250dad2924d6b9a37ddf6db8d85a [7f2b9e0]</span></div>
<div class="t v" style="top:515.5px;font-size:11px;line-height:13px;height:13px;color:#1a1a1a;letter-spacing:0.267px;left:210.3px;"><span id="t127">父級： </span></div>
<div class="t v" style="top:515.5px;font-size:11px;line-height:13px;height:13px;color:#4B7DB8;letter-spacing:0.01px;left:247.60000000000002px;"><span id="t128">17c1f0b109</span></div>
<div class="t v" style="top:528.5px;font-size:11px;line-height:13px;height:13px;color:#1a1a1a;letter-spacing:0.267px;left:210.3px;"><span id="t129">作者： </span></div>
<div class="t v" style="top:528.5px;font-size:11px;line-height:13px;height:13px;color:#1a1a1a;letter-spacing:0.366px;left:247.60000000000002px;"><span id="t130">WIN-K3OGDEESS66\Administrator</span></div>
<div class="t v" style="top:528.5px;font-size:11px;line-height:13px;height:13px;color:#1a1a1a;letter-spacing:0.011px;left:444.6px;"><span id="t131"> &lt;aaaa@qq.com&gt;</span></div>
<div class="t v" style="top:541.5px;font-size:11px;line-height:13px;height:13px;color:#1a1a1a;letter-spacing:0.267px;left:210.3px;"><span id="t132">日期： </span></div>
<div class="t v" style="top:541.5px;font-size:11px;line-height:13px;height:13px;color:#1a1a1a;letter-spacing:0.172px;left:247.60000000000002px;"><span id="t133">2025年1月21日 星期二 9:26:15</span></div>
<div class="t v" style="top:554.5px;font-size:11px;line-height:13px;height:13px;color:#1a1a1a;letter-spacing:0.2px;left:210.3px;"><span id="t134">提交者： </span></div>
<div class="t v" style="top:554.5px;font-size:11px;line-height:13px;height:13px;color:#1a1a1a;letter-spacing:0.366px;left:258.6px;"><span id="t135">WIN-K3OGDEESS66\Administrator</span></div>
<div class="t v" style="top:567.5px;font-size:11px;line-height:13px;height:13px;color:#1a1a1a;letter-spacing:0.16px;left:210.3px;"><span id="t136">提交时间： </span></div>
<div class="t v" style="top:567.5px;font-size:11px;line-height:13px;height:13px;color:#1a1a1a;letter-spacing:0.172px;left:269.6px;"><span id="t137">2025年1月21日 星期二 9:27:49</span></div>
<div class="t v" style="top:593.5px;font-size:11px;line-height:13px;height:13px;color:#1a1a1a;left:210.3px;"><span id="t138">1</span></div>
<div class="b" style="left:208px;top:649px;width:496px;height:1px;background:#C4C4C4;"></div>
<div class="b" style="left:469px;top:651px;width:1px;height:25px;background:#E0E0E0;"></div>
<div class="t " style="top:654.0px;font-size:12px;line-height:20px;height:20px;color:#1a1a1a;left:212px;"><span id="t139">?</span></div>
<div class="t " style="top:654.5px;font-size:12px;line-height:20px;height:20px;color:#1a1a1a;left:240px;"><span id="t140">文件名</span></div>
<div class="t " style="top:654.5px;font-size:12px;line-height:20px;height:20px;color:#1a1a1a;left:474px;"><span id="t141">路径</span></div>
<div class="b" style="left:208px;top:677px;width:496px;height:27px;background:#BFCCDA;"></div>
<svg class="b" style="left:216px;top:683px;" width="16" height="16" viewBox="0 0 16 16"><rect x="0.5" y="0.5" width="15" height="15" rx="3.4" fill="#FFAB00" stroke="#fff" stroke-width="1"/><path d="M3.76 12.4L4.64 9.6L9.76 4.32L11.84 6.4L6.56 11.52Z" fill="#fff"/></svg>
<div class="t " style="top:681.0px;font-size:12px;line-height:20px;height:20px;color:#000;letter-spacing:0.422px;left:241px;"><span id="t142">test.txt</span></div>
<div class="b" style="left:705px;top:471px;width:492px;height:29px;background:linear-gradient(#F6F6F6,#EFEFEF);border-bottom:1px solid #C4C4C4;"></div>
<svg class="b" style="left:709px;top:477px;" width="16" height="16" viewBox="0 0 16 16"><rect x="0.5" y="0.5" width="15" height="15" rx="3.4" fill="#FFAB00" stroke="#fff" stroke-width="1"/><path d="M3.76 12.4L4.64 9.6L9.76 4.32L11.84 6.4L6.56 11.52Z" fill="#fff"/></svg>
<div class="t " style="top:475.0px;font-size:12px;line-height:20px;height:20px;color:#111;font-weight:bold;letter-spacing:0.037px;left:730.5px;"><span id="t143">test.txt</span></div>
<div class="b" style="left:1098px;top:474px;width:42px;height:22px;background:#E1E1E1;border:1px solid #ADADAD;"></div>
<svg class="b" style="left:1104px;top:478px;" width="14" height="14" viewBox="0 0 14 14"><path fill="#666" fill-rule="evenodd" d="M13.69 5.78L13.69 8.22L11.76 8.18L11.20 9.53L12.59 10.87L10.87 12.59L9.53 11.20L8.18 11.76L8.22 13.69L5.78 13.69L5.82 11.76L4.47 11.20L3.13 12.59L1.41 10.87L2.80 9.53L2.24 8.18L0.31 8.22L0.31 5.78L2.24 5.82L2.80 4.47L1.41 3.13L3.13 1.41L4.47 2.80L5.82 2.24L5.78 0.31L8.22 0.31L8.18 2.24L9.53 2.80L10.87 1.41L12.59 3.13L11.20 4.47L11.76 5.82ZM7 4.6A2.4 2.4 0 1 0 7 9.4A2.4 2.4 0 1 0 7 4.6Z"/></svg>
<svg class="b" style="left:1125.5px;top:482.5px;" width="8" height="5" viewBox="0 0 8 5"><path d="M0.5 0.5L4 4L7.5 0.5" fill="none" stroke="#444" stroke-width="1.1"/></svg>
<svg class="b" style="left:1152px;top:483px;" width="17" height="5" viewBox="0 0 17 5"><circle cx="2" cy="2.5" r="1.9" fill="#222"/><circle cx="8.4" cy="2.5" r="1.9" fill="#222"/><circle cx="14.8" cy="2.5" r="1.9" fill="#222"/></svg>
<div class="b" style="left:705px;top:526px;width:478px;height:1px;background:#C9C9C9;"></div>
<div class="b" style="left:767px;top:500px;width:1px;height:106px;background:#C9C9C9;"></div>
<div class="t " style="top:503.5px;font-size:12px;line-height:20px;height:20px;color:#8A8A8A;letter-spacing:-0.216px;left:773px;"><span id="t144">块 1： 行 13-16</span></div>
<div class="b" style="left:1129px;top:502px;width:52px;height:22px;background:#E1E1E1;border:1px solid #ADADAD;"></div>
<div class="t " style="top:503.5px;font-size:11px;line-height:20px;height:20px;color:#222;left:1133.4px;"><span id="t145">回滚区块</span></div>
<div class="b" style="left:768px;top:566px;width:415px;height:13px;background:#DDFFDD;"></div>
<div class="t m" style="top:526.8px;font-size:10px;line-height:13px;height:13px;color:#999;letter-spacing:0.184px;left:707.3px;"><span id="t146">13</span></div>
<div class="t m" style="top:539.8px;font-size:10px;line-height:13px;height:13px;color:#999;letter-spacing:0.184px;left:707.3px;"><span id="t147">14</span></div>
<div class="t m" style="top:552.8px;font-size:10px;line-height:13px;height:13px;color:#999;letter-spacing:0.184px;left:707.3px;"><span id="t148">15</span></div>
<div class="t m" style="top:526.8px;font-size:10px;line-height:13px;height:13px;color:#999;letter-spacing:0.184px;left:737.6px;"><span id="t149">13</span></div>
<div class="t m" style="top:539.8px;font-size:10px;line-height:13px;height:13px;color:#999;letter-spacing:0.184px;left:737.6px;"><span id="t150">14</span></div>
<div class="t m" style="top:552.8px;font-size:10px;line-height:13px;height:13px;color:#999;letter-spacing:0.184px;left:737.6px;"><span id="t151">15</span></div>
<div class="t m" style="top:565.8px;font-size:10px;line-height:13px;height:13px;color:#999;letter-spacing:0.184px;left:737.6px;"><span id="t152">16</span></div>
<div class="t m" style="top:526.8px;font-size:10px;line-height:13px;height:13px;color:#C8C8C8;letter-spacing:0.142px;left:768.5px;"><span id="t153">···</span></div>
<div class="t m" style="top:527.6px;font-size:10px;line-height:13px;height:13px;color:#222;letter-spacing:0.142px;left:786.2px;"><span id="t154">abc</span></div>
<div class="t m" style="top:539.8px;font-size:10px;line-height:13px;height:13px;color:#C8C8C8;letter-spacing:0.142px;left:768.5px;"><span id="t155">···</span></div>
<div class="t m" style="top:540.6px;font-size:10px;line-height:13px;height:13px;color:#222;letter-spacing:0.142px;left:786.2px;"><span id="t156">efg</span></div>
<div class="t m" style="top:552.8px;font-size:10px;line-height:13px;height:13px;color:#C8C8C8;letter-spacing:0.142px;left:768.5px;"><span id="t157">···</span></div>
<div class="t m" style="top:553.6px;font-size:10px;line-height:13px;height:13px;color:#222;letter-spacing:0.142px;left:786.2px;"><span id="t158">hmn</span></div>
<div class="t m" style="top:565.8px;font-size:10px;line-height:13px;height:13px;color:#B8D8B8;left:768.5px;"><span id="t159">·</span></div>
<div class="t m" style="top:566.6px;font-size:10px;line-height:13px;height:13px;color:#222;left:774.3px;"><span id="t160">+</span></div>
<div class="t m" style="top:565.8px;font-size:10px;line-height:13px;height:13px;color:#B8D8B8;left:780.3px;"><span id="t161">·</span></div>
<div class="t m" style="top:566.6px;font-size:10px;line-height:13px;height:13px;color:#222;letter-spacing:0.142px;left:786.2px;"><span id="t162">xyz</span></div>
<div class="b" style="left:705px;top:606px;width:478px;height:1px;background:#C9C9C9;"></div>
<div class="b" style="left:1183px;top:471px;width:14px;height:326px;background:#F0F0F0;"></div>
<svg class="b" style="left:1186.5px;top:477px;" width="7" height="5" viewBox="0 0 7 5"><path d="M0.3 4.3L3.5 1L6.7 4.3" fill="none" stroke="#DADADA" stroke-width="0.9"/></svg>
<svg class="b" style="left:1186.5px;top:788px;" width="7" height="5" viewBox="0 0 7 5"><path d="M0.3 0.7L3.5 4L6.7 0.7" fill="none" stroke="#DADADA" stroke-width="0.9"/></svg>
<div class="b" style="left:0;top:0;width:1197px;height:470px;overflow:hidden;"><div class="b" style="left:350px;top:302px;width:479px;height:127px;border-radius:8px;box-shadow:0 18px 46px rgba(0,0,0,0.27),0 0 12px rgba(0,0,0,0.12);border:1px solid #B9B9B9;background:#fff;overflow:hidden;"><div class="b" style="left:0;top:0;width:477px;height:30px;background:#F3F3F3;"></div><div class="b" style="left:0;top:82px;width:477px;height:44px;background:#F1F1F1;border-top:1px solid #DFDFDF;"></div></div></div>
<div class="t " style="top:307.5px;font-size:12px;line-height:20px;height:20px;color:#8C8C8C;left:360px;"><span id="t163">确认合并</span></div>
<svg class="b" style="left:808px;top:312px;" width="10" height="10" viewBox="0 0 10 10"><path d="M0.5 0.5L9.5 9.5M9.5 0.5L0.5 9.5" stroke="#777" stroke-width="1" fill="none"/></svg>
<svg class="b" style="left:361px;top:343px;" width="32" height="32" viewBox="0 0 32 32"><defs><linearGradient id="ig" x1="0" y1="0" x2="0.6" y2="1"><stop offset="0" stop-color="#2A9DEB"/><stop offset="1" stop-color="#0867C6"/></linearGradient></defs><circle cx="16" cy="16" r="16" fill="url(#ig)"/><rect x="15" y="13.2" width="2" height="10.4" rx="0.6" fill="#fff"/><circle cx="16" cy="9.2" r="1.5" fill="#fff"/></svg>
<div class="t " style="top:347.0px;font-size:12px;line-height:20px;height:20px;color:#111;letter-spacing:0.152px;left:403px;"><span id="t164">你确定要把'dev'合并到当前分支中吗?</span></div>
<div class="b" style="left:364px;top:400px;width:13px;height:13px;background:#fff;border:1px solid #5A5A5A;border-radius:3px;"></div>
<div class="t " style="top:399.5px;font-size:12px;line-height:20px;height:20px;color:#111;left:387.6px;"><span id="t165">无论快进更新是否可以被执行都创建一个新的提交</span></div>
<div class="b" style="left:677px;top:395px;width:66px;height:23px;background:#FDFDFD;border:1.5px solid #0A66C4;border-radius:4.5px;"></div>
<div class="t " style="top:397.0px;font-size:12px;line-height:20px;height:20px;color:#111;left:510px;width:400px;text-align:center;"><span id="t166">确定</span></div>
<div class="b" style="left:751px;top:395px;width:66px;height:23px;background:#FDFDFD;border:1px solid #D0D0D0;border-radius:4.5px;"></div>
<div class="t " style="top:397.0px;font-size:12px;line-height:20px;height:20px;color:#111;left:584px;width:400px;text-align:center;"><span id="t167">取消</span></div>
<div class="t " style="top:369.3px;font-size:18px;line-height:26px;height:26px;color:#707070;font-weight:bold;left:448.5px;opacity:0.31;-webkit-text-stroke:0.5px #707070;transform:scaleX(1.2003);transform-origin:0 50%;"><span id="t168">@智汇技术</span></div>
<div class="t " style="top:369.6px;font-size:21px;line-height:26px;height:26px;color:#707070;font-weight:bold;left:568px;opacity:0.31;-webkit-text-stroke:0.5px #707070;transform:scaleX(1.1842);transform-origin:0 50%;"><span id="t169">www.80wz.com</span></div>
</body></html>
